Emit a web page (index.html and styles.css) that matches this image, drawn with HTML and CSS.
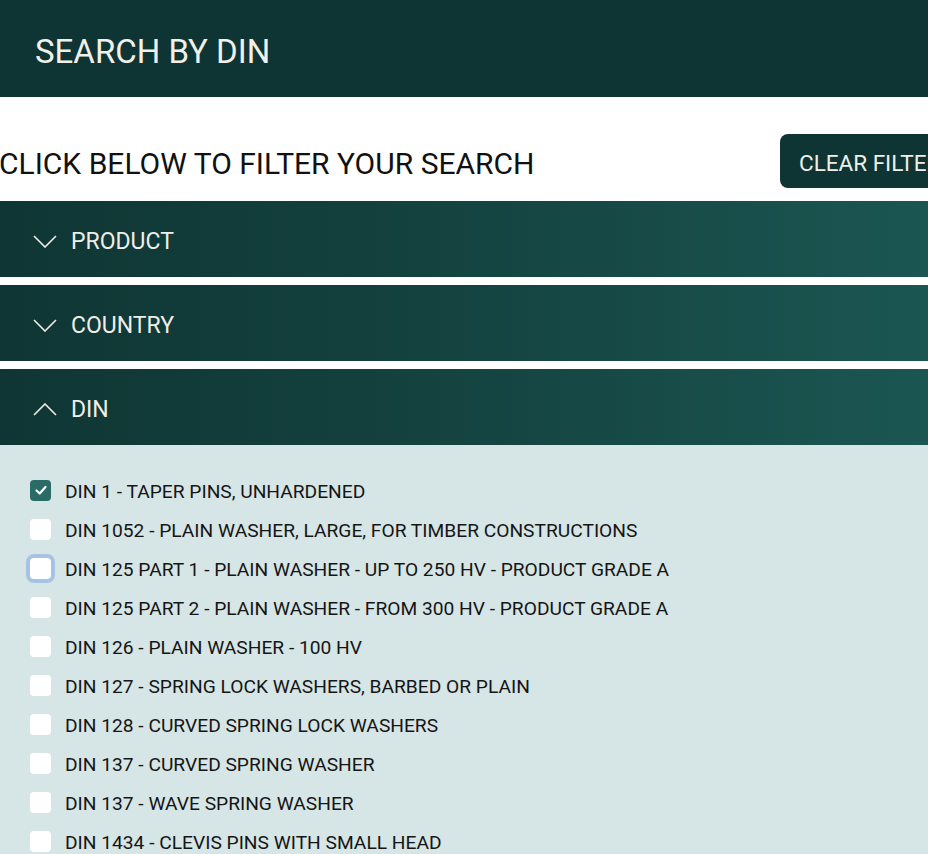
FILE: index.html
```html
<!DOCTYPE html>
<html>
<head>
<meta charset="utf-8">
<link rel="stylesheet" href="styles.css">
</head>
<body>
<header class="top">
  <h1 class="top-title">SEARCH BY DIN</h1>
</header>
<div class="toolbar">
  <h2 class="toolbar-title">CLICK BELOW TO FILTER YOUR SEARCH</h2>
  <button class="clear-btn">CLEAR FILTERS</button>
</div>
<div class="accordion">
  <div class="acc-head">
    <svg class="chev" viewBox="0 0 24 13"><path d="M1 1 L12 12 L23 1" /></svg>
    <span>PRODUCT</span>
  </div>
  <div class="acc-head">
    <svg class="chev" viewBox="0 0 24 13"><path d="M1 1 L12 12 L23 1" /></svg>
    <span>COUNTRY</span>
  </div>
  <div class="acc-head">
    <svg class="chev" viewBox="0 0 24 13"><path d="M1 12 L12 1 L23 12" /></svg>
    <span>DIN</span>
  </div>
  <div class="acc-panel">
    <ul class="opts">
      <li class="opt"><span class="box checked"><svg viewBox="0 0 20 20"><path d="M5.5 10.5 L8.7 13.5 L14.5 7" /></svg></span>DIN 1 - TAPER PINS, UNHARDENED</li>
      <li class="opt"><span class="box"></span>DIN 1052 - PLAIN WASHER, LARGE, FOR TIMBER CONSTRUCTIONS</li>
      <li class="opt"><span class="box focus"></span>DIN 125 PART 1 - PLAIN WASHER - UP TO 250 HV - PRODUCT GRADE A</li>
      <li class="opt"><span class="box"></span>DIN 125 PART 2 - PLAIN WASHER - FROM 300 HV - PRODUCT GRADE A</li>
      <li class="opt"><span class="box"></span>DIN 126 - PLAIN WASHER - 100 HV</li>
      <li class="opt"><span class="box"></span>DIN 127 - SPRING LOCK WASHERS, BARBED OR PLAIN</li>
      <li class="opt"><span class="box"></span>DIN 128 - CURVED SPRING LOCK WASHERS</li>
      <li class="opt"><span class="box"></span>DIN 137 - CURVED SPRING WASHER</li>
      <li class="opt"><span class="box"></span>DIN 137 - WAVE SPRING WASHER</li>
      <li class="opt"><span class="box"></span>DIN 1434 - CLEVIS PINS WITH SMALL HEAD</li>
    </ul>
  </div>
</div>
</body>
</html>
```
FILE: styles.css
```css
html, body {
  margin: 0;
  padding: 0;
  overflow: hidden;
  background: #ffffff;
  font-family: Roboto, "Liberation Sans", sans-serif;
}
.top {
  height: 97px;
  box-sizing: border-box;
  background: #0e3533;
  display: flex;
  align-items: center;
  padding: 6px 0 0 35px;
}
.top-title {
  margin: 0;
  color: #f2f0ea;
  font-weight: 400;
  font-size: 33px;
}
.toolbar {
  display: flex;
  align-items: center;
  justify-content: space-between;
  padding: 37px 0 13px 0;
  overflow: hidden;
}
.toolbar-title {
  margin: 4px 0 0 -1px;
  font-weight: 400;
  font-size: 30px;
  color: #111;
}
.clear-btn {
  flex: none;
  width: 200px;
  height: 54px;
  margin-right: -52px;
  border: none;
  border-radius: 8px;
  background: #0e3533;
  color: #f0eee8;
  font-family: Roboto, sans-serif;
  font-size: 22.5px;
  text-align: left;
  padding: 4px 0 0 19px;
  white-space: nowrap;
}
.accordion {
  display: flex;
  flex-direction: column;
  gap: 8px;
}
.acc-head {
  height: 76px;
  box-sizing: border-box;
  display: flex;
  align-items: center;
  padding: 5px 0 0 33px;
  background: linear-gradient(90deg, #0f3634 0%, #13403d 40%, #1b5652 100%);
  color: #f0eee8;
  font-size: 23px;
}
.chev {
  width: 24px;
  height: 13px;
  margin-right: 14px;
  fill: none;
  stroke: #f0eee8;
  stroke-width: 1.6;
}
.acc-panel {
  margin-top: -8px;
  background: #d6e5e5;
  padding: 27px 0 0 30px;
}
.opts {
  list-style: none;
  margin: 0;
  padding: 0;
}
.opt {
  height: 39px;
  display: flex;
  align-items: center;
  font-size: 19.2px;
  color: #151515;
}
.box {
  flex: none;
  width: 21px;
  height: 21px;
  border-radius: 4px;
  background: #ffffff;
  margin-right: 14px;
  margin-top: -3px;
  display: flex;
  align-items: center;
  justify-content: center;
}
.box.checked {
  background: #2b6b66;
}
.box svg {
  width: 20px;
  height: 20px;
  fill: none;
  stroke: #ffffff;
  stroke-width: 2.2;
  stroke-linecap: round;
  stroke-linejoin: round;
}
.box.focus {
  box-shadow: 0 0 0 4px #a7c3e3;
}
```
